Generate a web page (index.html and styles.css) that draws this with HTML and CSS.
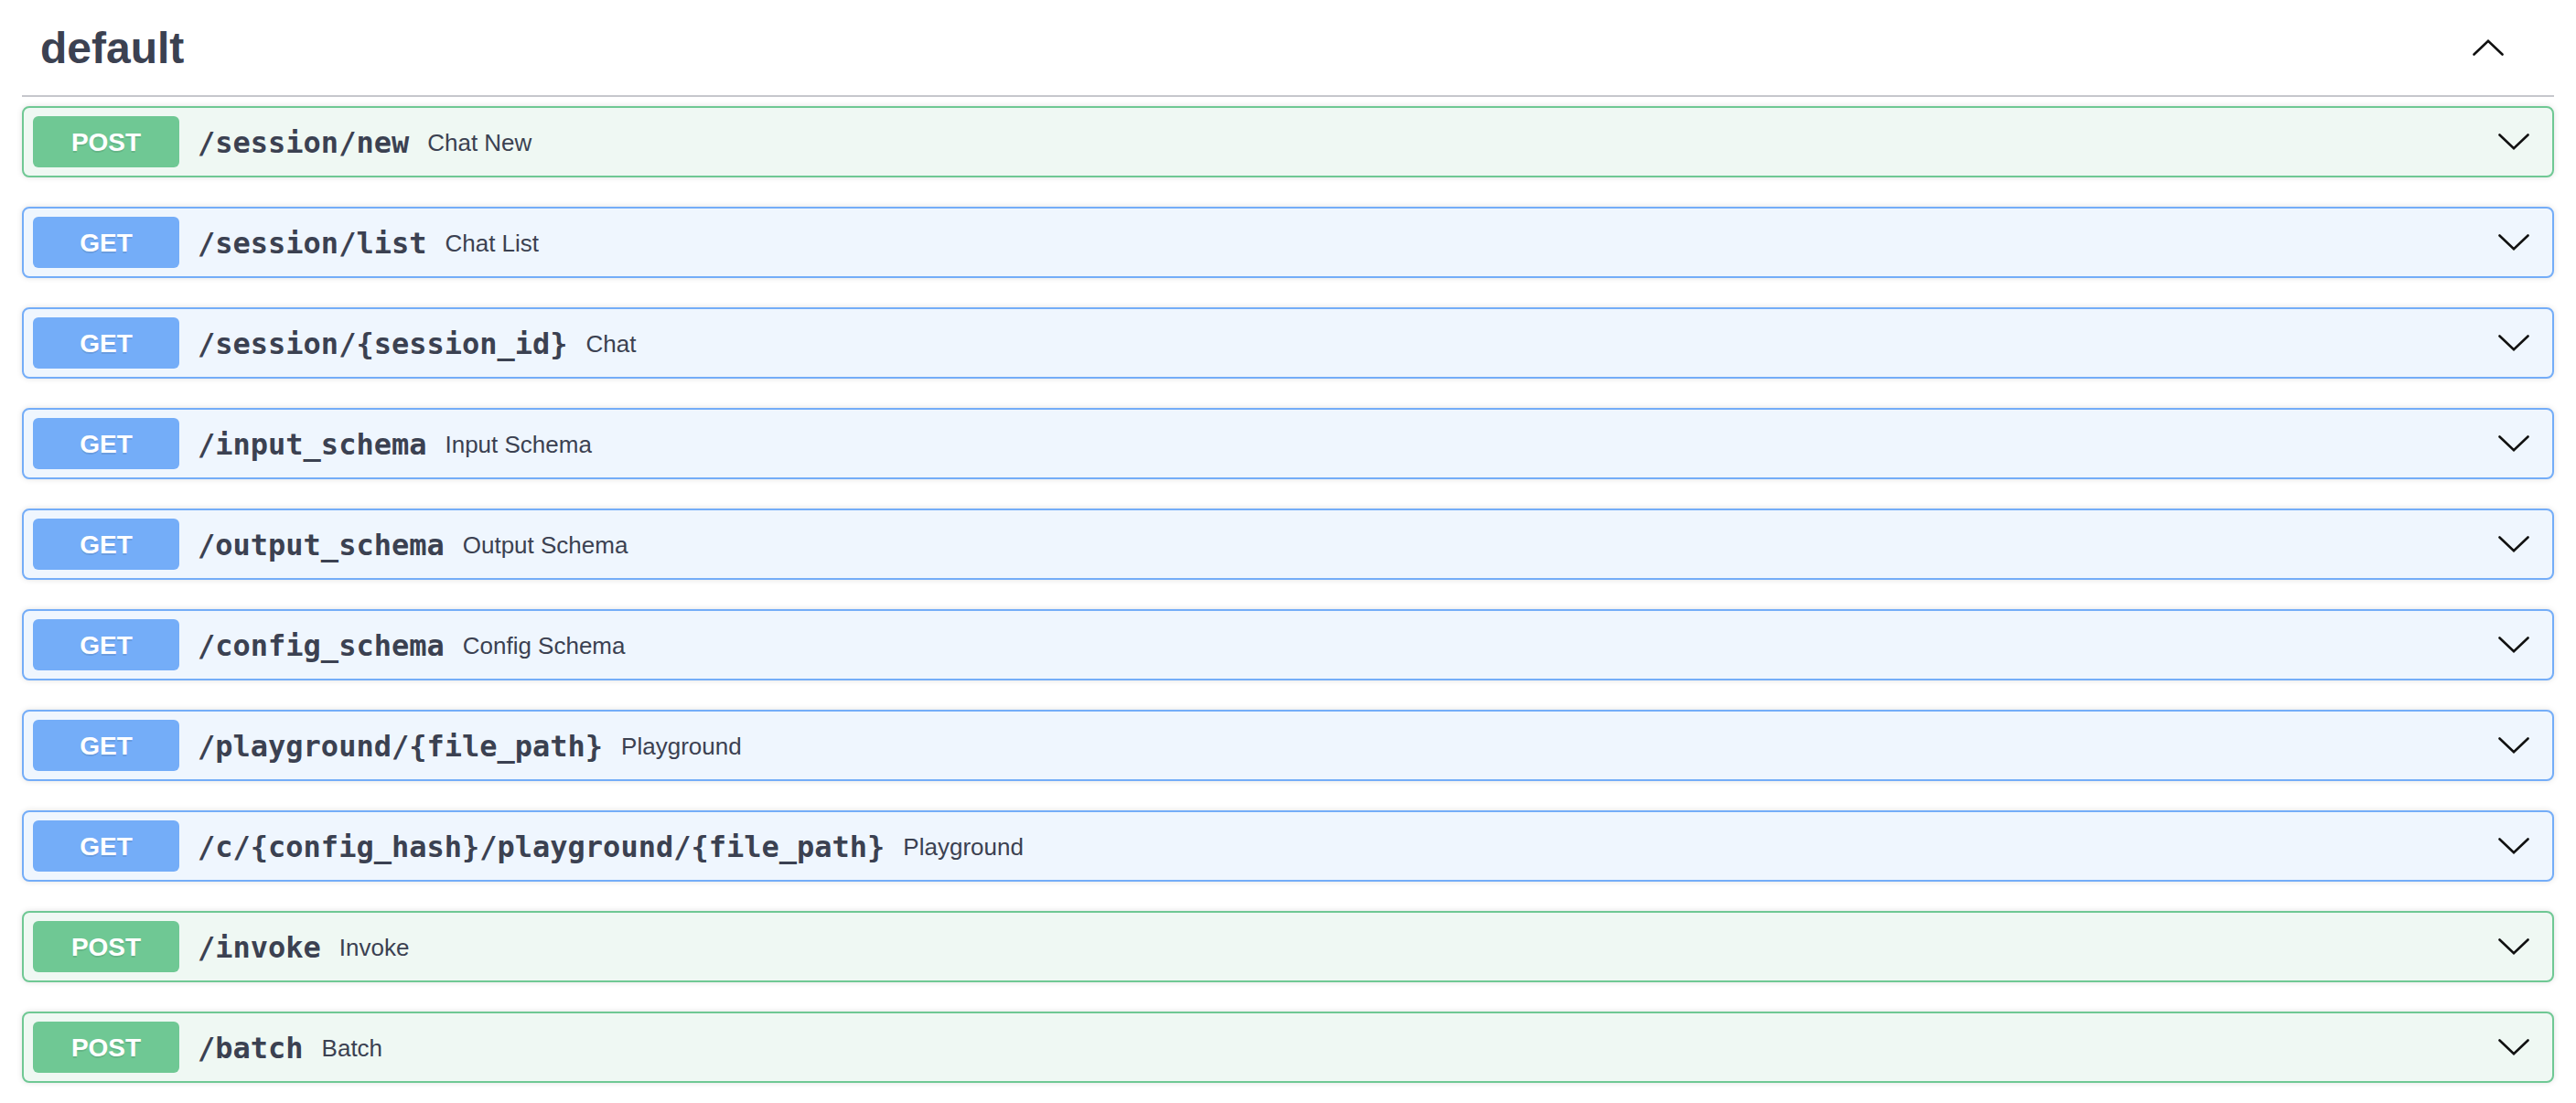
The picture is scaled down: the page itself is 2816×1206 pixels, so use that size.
FILE: index.html
```html
<!DOCTYPE html>
<html lang="en">
<head>
<meta charset="utf-8">
<title>default</title>
<link rel="stylesheet" href="styles.css">
</head>
<body>
<div class="wrapper">
  <section class="tag-section">
    <h3 class="tag">
      <span class="tag-name">default</span>
      <svg class="chev chev-up" viewBox="0 0 34 18" width="34" height="18"><polyline points="1.5,16.5 17,1.8 32.5,16.5" /></svg>
    </h3>

    <div class="opblock post">
      <div class="summary"><span class="method">POST</span><span class="path">/session/new</span><span class="desc">Chat New</span>
        <svg class="chev" viewBox="0 0 34 18" width="34" height="18"><polyline points="1.5,1.5 17,16.2 32.5,1.5" /></svg></div>
    </div>
    <div class="opblock get">
      <div class="summary"><span class="method">GET</span><span class="path">/session/list</span><span class="desc">Chat List</span>
        <svg class="chev" viewBox="0 0 34 18" width="34" height="18"><polyline points="1.5,1.5 17,16.2 32.5,1.5" /></svg></div>
    </div>
    <div class="opblock get">
      <div class="summary"><span class="method">GET</span><span class="path">/session/{session_id}</span><span class="desc">Chat</span>
        <svg class="chev" viewBox="0 0 34 18" width="34" height="18"><polyline points="1.5,1.5 17,16.2 32.5,1.5" /></svg></div>
    </div>
    <div class="opblock get">
      <div class="summary"><span class="method">GET</span><span class="path">/input_schema</span><span class="desc">Input Schema</span>
        <svg class="chev" viewBox="0 0 34 18" width="34" height="18"><polyline points="1.5,1.5 17,16.2 32.5,1.5" /></svg></div>
    </div>
    <div class="opblock get">
      <div class="summary"><span class="method">GET</span><span class="path">/output_schema</span><span class="desc">Output Schema</span>
        <svg class="chev" viewBox="0 0 34 18" width="34" height="18"><polyline points="1.5,1.5 17,16.2 32.5,1.5" /></svg></div>
    </div>
    <div class="opblock get">
      <div class="summary"><span class="method">GET</span><span class="path">/config_schema</span><span class="desc">Config Schema</span>
        <svg class="chev" viewBox="0 0 34 18" width="34" height="18"><polyline points="1.5,1.5 17,16.2 32.5,1.5" /></svg></div>
    </div>
    <div class="opblock get">
      <div class="summary"><span class="method">GET</span><span class="path">/playground/{file_path}</span><span class="desc">Playground</span>
        <svg class="chev" viewBox="0 0 34 18" width="34" height="18"><polyline points="1.5,1.5 17,16.2 32.5,1.5" /></svg></div>
    </div>
    <div class="opblock get">
      <div class="summary"><span class="method">GET</span><span class="path">/c/{config_hash}/playground/{file_path}</span><span class="desc">Playground</span>
        <svg class="chev" viewBox="0 0 34 18" width="34" height="18"><polyline points="1.5,1.5 17,16.2 32.5,1.5" /></svg></div>
    </div>
    <div class="opblock post">
      <div class="summary"><span class="method">POST</span><span class="path">/invoke</span><span class="desc">Invoke</span>
        <svg class="chev" viewBox="0 0 34 18" width="34" height="18"><polyline points="1.5,1.5 17,16.2 32.5,1.5" /></svg></div>
    </div>
    <div class="opblock post">
      <div class="summary"><span class="method">POST</span><span class="path">/batch</span><span class="desc">Batch</span>
        <svg class="chev" viewBox="0 0 34 18" width="34" height="18"><polyline points="1.5,1.5 17,16.2 32.5,1.5" /></svg></div>
    </div>
  </section>
</div>
</body>
</html>
```

FILE: styles.css
```css
html, body {
  margin: 0;
  padding: 0;
  background: #ffffff;
}

body {
  font-family: "Liberation Sans", Arial, sans-serif;
  color: #3b4151;
}

.wrapper {
  padding: 0 24px;
}

.tag {
  display: flex;
  align-items: center;
  height: 104px;
  margin: 0 0 10px 0;
  padding: 0 55px 0 20px;
  border-bottom: 2px solid #c6c7cc;
  font-size: 48px;
  font-weight: bold;
  color: #3b4151;
}

.tag-name {
  flex: 1;
}

.chev {
  display: block;
  flex: none;
}

.chev polyline {
  fill: none;
  stroke: #111111;
  stroke-width: 2.6;
  stroke-linecap: round;
  stroke-linejoin: miter;
}

.opblock {
  border: 2px solid #74adf8;
  border-radius: 8px;
  margin-bottom: 32px;
  box-shadow: 0 0 6px rgba(0, 0, 0, 0.12);
}

.opblock.get {
  border-color: #74adf8;
  background: #eff6fe;
}

.opblock.post {
  border-color: #6fc894;
  background: #eff8f3;
}

.summary {
  display: flex;
  align-items: center;
  padding: 9px 25px 9px 10px;
}

.method {
  flex: none;
  min-width: 160px;
  height: 56px;
  line-height: 57px;
  text-align: center;
  border-radius: 6px;
  color: #ffffff;
  font-size: 28px;
  font-weight: bold;
  text-shadow: 0 2px 0 rgba(0, 0, 0, 0.1);
}

.get .method {
  background: #74adf8;
}

.post .method {
  background: #6fc894;
}

.path {
  padding: 2px 20px 0;
  font-family: "DejaVu Sans Mono", "Liberation Mono", monospace;
  font-size: 32px;
  font-weight: bold;
  color: #3b4151;
}

.desc {
  flex: 1;
  padding-top: 2px;
  font-size: 26px;
  color: #3b4151;
}
```
